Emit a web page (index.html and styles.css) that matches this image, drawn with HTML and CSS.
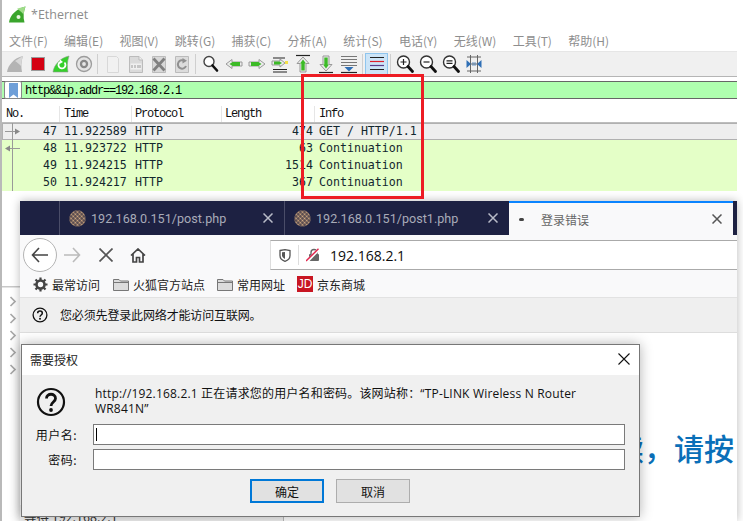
FILE: index.html
```html
<!DOCTYPE html>
<html lang="zh">
<head>
<meta charset="utf-8">
<title>Ethernet</title>
<link rel="stylesheet" href="styles.css">
</head>
<body>
<div class="desktop">

  <section class="ws">
    <div class="ws-title">
      <svg class="ws-logo" width="17" height="17" viewBox="0 0 17 17"><path d="M0 16.5C1 9 7 3 16.5 0.500C14.500 6 14 11 15.500 16.500Z" fill="#3aa52c"/><path d="M8 2.800C11 1.800 14 1 16.500 0.500C15.500 3.500 15 6 14.700 8.500C12 5.500 10 4 8 2.800Z" fill="#9fdc8a"/><circle cx="9.500" cy="11" r="2" fill="#e8f7e0"/></svg>
      <span>*Ethernet</span>
    </div>
    <nav class="ws-menu">
      <span>文件(F)</span><span>编辑(E)</span><span>视图(V)</span><span>跳转(G)</span><span>捕获(C)</span><span>分析(A)</span><span>统计(S)</span><span>电话(Y)</span><span>无线(W)</span><span>工具(T)</span><span>帮助(H)</span>
    </nav>
    <div class="ws-tools">
      <span class="tool"><svg width="20" height="20" viewBox="0 0 20 20"><path d="M2 18C3 11 9 4 18 2C16 8 16 13 17 18Z" fill="#b4b4b4"/><path d="M10 7C13 5 15 4 18 2C16.500 6 16.300 9 16 12C14 10 12 8 10 7Z" fill="#d8d8d8"/></svg></span>
      <span class="tool"><svg width="20" height="20" viewBox="0 0 20 20"><rect x="3.500" y="3.500" width="13" height="13" fill="#d40012" stroke="#9a9a9a"/></svg></span>
      <span class="tool"><svg width="20" height="20" viewBox="0 0 20 20"><path d="M2 18C3 11 9 4 18 2C16 8 16 13 17 18Z" fill="#35d02b" stroke="#8a9a8a" stroke-width=".6"/><path d="M13.500 8.500A3.500 3.500 0 1 1 9 8" fill="none" stroke="#fff" stroke-width="1.800"/><path d="M9 5.500L12 8L8.500 10Z" fill="#fff"/></svg></span>
      <span class="tool"><svg width="20" height="20" viewBox="0 0 20 20"><circle cx="10" cy="10" r="7.500" fill="#e4e4e4" stroke="#9c9c9c" stroke-width="1.300"/><circle cx="10" cy="10" r="4.200" fill="#888"/><circle cx="10" cy="10" r="1.900" fill="#e6e6e6"/></svg></span>
      <i class="tool-sep"></i>
      <span class="tool"><svg width="20" height="20" viewBox="0 0 20 20"><path d="M4.500 2.500H13.500L15.500 4.500V18.500H4.500Z" fill="#f1f1f1" stroke="#d8d8d8"/></svg></span>
      <span class="tool"><svg width="20" height="20" viewBox="0 0 20 20"><path d="M3.500 2.500H13L16.500 6V18.500H3.500Z" fill="#dadada" stroke="#bbb"/><path d="M13 2.500V6H16.500" fill="#f2f2f2" stroke="#bbb"/><rect x="4.500" y="9.500" width="11" height="6" fill="#f0f0f0"/><path d="M6 11V14M9 11V14M12 11V14M14 11V14" stroke="#9a9a9a"/></svg></span>
      <span class="tool"><svg width="20" height="20" viewBox="0 0 20 20"><path d="M3.500 2.500H16.500V18.500H3.500Z" fill="#d8d8d8" stroke="#bbb"/><path d="M4.500 4.500L15.500 16.500M15.500 4.500L4.500 16.500" stroke="#808080" stroke-width="2.800"/></svg></span>
      <span class="tool"><svg width="20" height="20" viewBox="0 0 20 20"><path d="M3.500 2.500H16.500V18.500H3.500Z" fill="#dcdcdc" stroke="#bbb"/><path d="M14 12A4.200 4.200 0 1 1 12.500 7" fill="none" stroke="#909090" stroke-width="2"/><path d="M10.500 4L15 6.800L10.500 9.500Z" fill="#909090"/></svg></span>
      <i class="tool-sep"></i>
      <span class="tool"><svg width="20" height="20" viewBox="0 0 20 20"><circle cx="8" cy="7.500" r="5" fill="#fff" stroke="#444" stroke-width="1.400"/><path d="M11.500 11.500L16 16.500" stroke="#111" stroke-width="2.600" stroke-linecap="round"/></svg></span>
      <span class="tool"><svg width="20" height="20" viewBox="0 0 20 20"><path d="M2 10L8 5.500V8H18V12H8V14.500Z" fill="#ececec" stroke="#9a9a9a"/><path d="M5.500 10L8.500 8H16V12H8.500Z" fill="#3cba27"/></svg></span>
      <span class="tool"><svg width="20" height="20" viewBox="0 0 20 20"><path d="M18 10L12 5.500V8H2V12H12V14.500Z" fill="#ececec" stroke="#9a9a9a"/><path d="M14.500 10L11.500 8H4V12H11.500Z" fill="#3cba27"/></svg></span>
      <span class="tool"><svg width="20" height="20" viewBox="0 0 20 20"><path d="M3 4H15M3 15.500H17M3 18H17" stroke="#222" stroke-width="1.200"/><path d="M15 9L10 5V7H2V11H10V13Z" fill="#ececec" stroke="#999"/><path d="M12 9L9.500 7.500H4V10.500H9.500Z" fill="#3cba27"/><rect x="15" y="7" width="3" height="3" fill="#f3df4b"/></svg></span>
      <span class="tool"><svg width="20" height="20" viewBox="0 0 20 20"><path d="M3 1.500H17" stroke="#222" stroke-width="1.200"/><path d="M10 3L16 9.500H13V18H7V9.500H4Z" fill="#ececec" stroke="#999"/><path d="M10 5.500L13 9.500H11.700V16.500H8.300V9.500H7Z" fill="#3cba27"/></svg></span>
      <span class="tool"><svg width="20" height="20" viewBox="0 0 20 20"><path d="M3 18.500H17" stroke="#222" stroke-width="1.200"/><path d="M10 17L16 10.500H13V2H7V10.500H4Z" fill="#ececec" stroke="#999"/><path d="M10 14.500L13 10.500H11.700V3.500H8.300V10.500H7Z" fill="#3cba27"/></svg></span>
      <span class="tool"><svg width="20" height="20" viewBox="0 0 20 20"><path d="M2 2.500H18M2 5.500H18M2 8.500H18M2 11.500H18" stroke="#777" stroke-width="1"/><path d="M2 18.500H18" stroke="#222" stroke-width="1.200"/><path d="M5.500 13H14.500L10 17.500Z" fill="#2f6fb5"/></svg></span>
      <i class="tool-sep tool-sep-tight"></i>
      <span class="tool tool-on"><svg width="20" height="20" viewBox="0 0 20 20"><path d="M3 3.500H17M3 15.500H17" stroke="#222" stroke-width="1.200"/><path d="M3 7.500H17" stroke="#e0202a" stroke-width="1.200"/><path d="M3 11.500H17" stroke="#5a3d8a" stroke-width="1.200"/></svg></span>
      <i class="tool-sep tool-sep-tight"></i>
      <span class="tool"><svg width="20" height="20" viewBox="0 0 20 20"><circle cx="8.500" cy="8" r="6" fill="#fff" stroke="#333" stroke-width="1.400"/><path d="M5.500 8H11.500M8.500 5V11" stroke="#222" stroke-width="1.200"/><path d="M13 12.500L17.500 17.500" stroke="#111" stroke-width="2.800" stroke-linecap="round"/></svg></span>
      <span class="tool"><svg width="20" height="20" viewBox="0 0 20 20"><circle cx="8.500" cy="8" r="6" fill="#fff" stroke="#333" stroke-width="1.400"/><path d="M5.500 8H11.500" stroke="#222" stroke-width="1.200"/><path d="M13 12.500L17.500 17.500" stroke="#111" stroke-width="2.800" stroke-linecap="round"/></svg></span>
      <span class="tool"><svg width="20" height="20" viewBox="0 0 20 20"><circle cx="8.500" cy="8" r="6" fill="#fff" stroke="#333" stroke-width="1.400"/><path d="M5.500 6.800H11.500M5.500 9.300H11.500" stroke="#222" stroke-width="1.200"/><path d="M13 12.500L17.500 17.500" stroke="#111" stroke-width="2.800" stroke-linecap="round"/></svg></span>
      <span class="tool"><svg width="20" height="20" viewBox="0 0 20 20"><path d="M3 3H17M3 10H17M3 17H17M6.500 1V19M13.500 1V19" stroke="#666" stroke-width="1"/><path d="M2.500 6L7 10L2.500 14ZM17.500 6L13 10L17.500 14Z" fill="#2f6fb5"/><path d="M8 8H12V12H8Z" fill="#2f6fb5" opacity=".35"/></svg></span>
    </div>
    <div class="ws-filter">
      <span class="bookmark"><svg width="9" height="15" viewBox="0 0 9 15"><path d="M0 0H9V15L4.500 11.500L0 15Z" fill="#6f9fd8"/></svg></span>
      <span class="filter-text">http&amp;&amp;ip.addr==192.168.2.1</span>
    </div>
    <div class="pk-head">
      <span>No.</span><span>Time</span><span>Protocol</span><span>Length</span><span>Info</span>
    </div>
    <div class="pk-row pk-sel">
      <svg class="pk-tree" width="20" height="17" viewBox="0 0 20 17"><path d="M10.500 0V17M3 8.500H14" stroke="#999"/><path d="M13 5.500L18 8.500L13 11.500Z" fill="#888"/></svg>
      <span class="pk-no">47</span><span>11.922589</span><span>HTTP</span><span class="pk-len">474</span><span>GET / HTTP/1.1</span>
    </div>
    <div class="pk-row pk-data">
      <svg class="pk-tree" width="20" height="17" viewBox="0 0 20 17"><path d="M10.500 0V17M6 8.500H18" stroke="#999"/><path d="M8 5.500L3 8.500L8 11.500Z" fill="#888"/></svg>
      <span class="pk-no">48</span><span>11.923722</span><span>HTTP</span><span class="pk-len">63</span><span>Continuation</span>
    </div>
    <div class="pk-row pk-data">
      <svg class="pk-tree" width="20" height="17" viewBox="0 0 20 17"><path d="M10.500 0V17" stroke="#999"/></svg>
      <span class="pk-no">49</span><span>11.924215</span><span>HTTP</span><span class="pk-len">1514</span><span>Continuation</span>
    </div>
    <div class="pk-row pk-data">
      <svg class="pk-tree" width="20" height="17" viewBox="0 0 20 17"><path d="M10.500 0V17" stroke="#999"/></svg>
      <span class="pk-no">50</span><span>11.924217</span><span>HTTP</span><span class="pk-len">367</span><span>Continuation</span>
    </div>
    <div class="ws-split"></div>
    <div class="ws-detail">
      <svg width="8" height="11" viewBox="0 0 8 11"><path d="M1.500 1L6 5.500L1.500 10" fill="none" stroke="#aaa" stroke-width="1.700"/></svg>
      <svg width="8" height="11" viewBox="0 0 8 11"><path d="M1.500 1L6 5.500L1.500 10" fill="none" stroke="#aaa" stroke-width="1.700"/></svg>
      <svg width="8" height="11" viewBox="0 0 8 11"><path d="M1.500 1L6 5.500L1.500 10" fill="none" stroke="#aaa" stroke-width="1.700"/></svg>
      <svg width="8" height="11" viewBox="0 0 8 11"><path d="M1.500 1L6 5.500L1.500 10" fill="none" stroke="#aaa" stroke-width="1.700"/></svg>
      <svg width="8" height="11" viewBox="0 0 8 11"><path d="M1.500 1L6 5.500L1.500 10" fill="none" stroke="#aaa" stroke-width="1.700"/></svg>
    </div>
  </section>

  <section class="ff">
    <div class="ff-tabs">
      <div class="ff-tab">
        <svg class="favicon" width="17" height="17" viewBox="0 0 17 17"><defs><pattern id="fav" width="3" height="3" patternUnits="userSpaceOnUse" patternTransform="rotate(45)"><rect width="3" height="3" fill="#4a3f48"/><circle cx="1.500" cy="1.500" r="1.100" fill="#d9b184"/></pattern></defs><circle cx="8.500" cy="8.500" r="8.300" fill="url(#fav)"/></svg>
        <span class="ff-tab-title">192.168.0.151/post.php</span>
        <svg class="ff-x" width="10" height="10" viewBox="0 0 10 10"><path d="M.5 .5L9.500 9.500M9.500 .5L.5 9.500" stroke="#b9bcc8" stroke-width="1.500"/></svg>
      </div>
      <div class="ff-tab">
        <svg class="favicon" width="17" height="17" viewBox="0 0 17 17"><circle cx="8.500" cy="8.500" r="8.300" fill="url(#fav)"/></svg>
        <span class="ff-tab-title">192.168.0.151/post1.php</span>
        <svg class="ff-x" width="10" height="10" viewBox="0 0 10 10"><path d="M.5 .5L9.500 9.500M9.500 .5L.5 9.500" stroke="#b9bcc8" stroke-width="1.500"/></svg>
      </div>
      <div class="ff-tab ff-tab-on">
        <i class="ff-busy"></i>
        <span class="ff-tab-title">登录错误</span>
        <svg class="ff-x" width="10" height="10" viewBox="0 0 10 10"><path d="M.5 .5L9.500 9.500M9.500 .5L.5 9.500" stroke="#555" stroke-width="1.500"/></svg>
      </div>
    </div>
    <div class="ff-nav">
      <span class="ff-back"><svg width="18" height="16" viewBox="0 0 18 16"><path d="M8 1L1.500 8L8 15M1.500 8H17" fill="none" stroke="#444" stroke-width="1.600"/></svg></span>
      <svg class="ff-fwd" width="17" height="16" viewBox="0 0 17 16"><path d="M9 1L15.500 8L9 15M15.500 8H0" fill="none" stroke="#bbb" stroke-width="1.600"/></svg>
      <svg class="ff-stop" width="14" height="14" viewBox="0 0 14 14"><path d="M.5 .5L13.500 13.500M13.500 .5L.5 13.500" stroke="#555" stroke-width="1.700"/></svg>
      <svg class="ff-home" width="16" height="15" viewBox="0 0 16 15"><path d="M1 7.500L8 1L15 7.500M3 6V14H6.500V9.500H9.500V14H13V6" fill="none" stroke="#444" stroke-width="1.700"/></svg>
      <div class="ff-url">
        <svg class="ff-shield" width="12" height="13" viewBox="0 0 12 13"><path d="M1 1.500L6 .7L11 1.500V6.500C11 9.500 8.500 11.500 6 12.300C3.500 11.500 1 9.500 1 6.500Z" fill="none" stroke="#555" stroke-width="1.300"/><path d="M6 3V10C4.500 9.300 3 8 3 6.500V3.200Z" fill="#555"/></svg>
        <i class="ff-url-sep"></i>
        <svg class="ff-lock" width="14" height="14" viewBox="0 0 14 14"><rect x="3" y="6" width="10" height="7" rx="1" fill="#666"/><path d="M5 6V4.500A3 3 0 0 1 11 4.500V6" fill="none" stroke="#666" stroke-width="1.400"/><path d="M1 13.500L13 1" stroke="#fff" stroke-width="3"/><path d="M0 13L12.500 .8" stroke="#e22850" stroke-width="1.500"/></svg>
        <span class="ff-url-text">192.168.2.1</span>
      </div>
    </div>
    <div class="ff-marks">
      <span class="mark mark-most"><svg width="15" height="15" viewBox="0 0 15 15"><circle cx="7.500" cy="7.500" r="4" fill="none" stroke="#444" stroke-width="2.600"/><path d="M7.500 .5V3M7.500 12V14.500M.5 7.500H3M12 7.500H14.500M2.500 2.500L4.300 4.300M10.700 10.700L12.500 12.500M12.500 2.500L10.700 4.300M4.300 10.700L2.500 12.500" stroke="#444" stroke-width="2.200"/></svg>最常访问</span>
      <span class="mark"><svg width="16" height="13" viewBox="0 0 16 13"><path d="M.5 12.500V1.500H6L7.500 3H15.500V12.500Z" fill="#dcdcdc" stroke="#777"/><path d="M.5 4.500H15.500" stroke="#777"/></svg>火狐官方站点</span>
      <span class="mark"><svg width="16" height="13" viewBox="0 0 16 13"><path d="M.5 12.500V1.500H6L7.500 3H15.500V12.500Z" fill="#dcdcdc" stroke="#777"/><path d="M.5 4.500H15.500" stroke="#777"/></svg>常用网址</span>
      <span class="mark"><span class="jd">JD</span>京东商城</span>
    </div>
    <div class="ff-notice">
      <svg width="16" height="16" viewBox="0 0 16 16"><circle cx="8" cy="8" r="6.900" fill="none" stroke="#111" stroke-width="1.300"/><path d="M5.700 6.200C5.700 3.400 10.300 3.400 10.300 6.200C10.300 8 8 8 8 9.800" fill="none" stroke="#111" stroke-width="1.500"/><circle cx="8" cy="11.800" r="1" fill="#111"/></svg>
      <span>您必须先登录此网络才能访问互联网。</span>
    </div>
    <div class="ff-page">
      <p class="ff-big">续，请按</p>
    </div>
    <div class="ff-status">等待 192.168.2.1</div>
  </section>

  <div class="annot"></div>

  <section class="dlg">
    <header class="dlg-title">
      <span>需要授权</span>
      <svg width="12" height="12" viewBox="0 0 12 12"><path d="M.5 .5L11.500 11.500M11.500 .5L.5 11.500" stroke="#111" stroke-width="1.100"/></svg>
    </header>
    <div class="dlg-body">
      <div class="dlg-msg">
        <svg width="30" height="30" viewBox="0 0 30 30"><circle cx="15" cy="15" r="13" fill="none" stroke="#111" stroke-width="2.200"/><path d="M10.500 11.500C10.500 5.800 19.500 5.800 19.500 11.500C19.500 15 15 15 15 19" fill="none" stroke="#111" stroke-width="2.800"/><circle cx="15" cy="23" r="1.900" fill="#111"/></svg>
        <p>http://192.168.2.1 正在请求您的用户名和密码。该网站称：“TP-LINK Wireless N Router WR841N”</p>
      </div>
      <div class="dlg-fields">
        <label>用户名:</label><div class="dlg-input"><i class="caret"></i></div>
        <label>密码:</label><div class="dlg-input"></div>
      </div>
      <div class="dlg-btns">
        <button class="btn btn-def">确定</button>
        <button class="btn">取消</button>
      </div>
    </div>
  </section>
</div>
</body>
</html>
```

FILE: styles.css
```css
* { box-sizing: border-box; }
html, body { margin: 0; background: #fff; }
body { font-family: "Noto Sans CJK SC", sans-serif; font-size: 12px; }
.desktop { position: relative; width: 743px; height: 521px; overflow: hidden; background: #fff; }

/* Wireshark window */
.ws { position: absolute; left: 0; top: 0; width: 737px; height: 521px; border-left: 2px solid #b9b9b9; background: #fff; display: flex; flex-direction: column; }
.ws-title { flex: none; height: 28px; display: flex; align-items: center; gap: 5px; padding-left: 7px; color: #8c8c8c; font: 12.500px "Open Sans", sans-serif; }
.ws-logo { flex: none; }
.ws-menu { flex: none; height: 23px; display: flex; gap: 16.300px; align-items: center; padding: 2px 0 0 7px; color: #8e8e8e; font: 12px "Noto Sans CJK SC", sans-serif; }
.ws-tools { flex: none; height: 26px; display: flex; align-items: center; padding-left: 1px; background: #f0f0f0; border-top: 1px solid #e6e6e6; border-bottom: 1px solid #b5b5b5; }
.tool { flex: none; width: 23px; height: 22px; display: flex; align-items: center; justify-content: center; }
.tool-on { background: #cce4f7; border: 1px solid #8fc5ee; }
.tool-sep { flex: none; width: 1px; height: 20px; margin: 0 3px 0 2px; background: #cfcfcf; }
.tool-sep-tight { margin-right: 2px; }
.ws-filter { height: 18px; margin-top: 4px; display: flex; align-items: stretch; background: #afffaf; border-top: 1px solid #666; border-bottom: 1px solid #666; flex: none; }
.bookmark { width: 18px; margin-left: 2px; background: #fff; border: 1px solid #888; border-radius: 2px; margin-top: -1px; margin-bottom: -1px; display: flex; align-items: center; justify-content: center; }
.filter-text { padding: 1px 0 0 3px; font: 12px/16px "Liberation Mono", monospace; letter-spacing: -1.200px; color: #000; }
.pk-head { flex: none; height: 24px; padding-top: 7px; display: grid; grid-template-columns: 58px 72px 90px 93px 1fr; border-bottom: 1px solid #bdbdbd; font: 12px/16px "Liberation Mono", monospace; letter-spacing: -1.200px; color: #111; }
.pk-head span { padding-left: 3px; border-right: 1px solid #e6e6e6; }
.pk-head span:first-child, .pk-head span:nth-child(2), .pk-head span:last-child { padding-left: 4px; }
.pk-head span:last-child { border-right: 0; }
.pk-row { flex: none; position: relative; height: 17px; display: grid; grid-template-columns: 59px 71px 90px 91px 1fr; font: 11.600px/17px "DejaVu Sans Mono", monospace; color: #12272e; white-space: nowrap; }
.pk-row span:nth-of-type(2) { padding-left: 3px; }
.pk-row span:nth-of-type(3) { padding-left: 3px; }
.pk-row span:nth-of-type(5) { padding-left: 6px; }
.pk-no, .pk-len { text-align: right; }
.pk-no { padding-right: 4px; }
.pk-sel { background: #eeeeee; border-top: 1px solid #b0b0b0; border-bottom: 1px solid #b0b0b0; box-shadow: inset 1px 0 #b0b0b0; line-height: 15px; }
.pk-data { background: #e4ffc7; }
.pk-tree { position: absolute; left: 0; top: 0; }
.pk-sel .pk-tree { top: -1px; }
.ws-split { height: 2px; margin-top: 95px; border-top: 1px solid #c8c8c8; border-bottom: 1px solid #e4e4e4; background: #f0f0f0; flex: none; }
.ws-detail { margin-top: 8px; padding-left: 7px; display: flex; flex-direction: column; gap: 6px; }

/* Firefox window */
.ff { position: absolute; left: 20px; top: 201px; width: 717px; height: 320px; background: #fff; box-shadow: 0 0 9px rgba(0,0,0,.28); display: flex; flex-direction: column; }
.ff-tabs { flex: none; height: 34px; padding-left: 39px; display: flex; background: #1d2142; }
.ff-tab { width: 225px; height: 34px; display: flex; align-items: center; padding: 0 11px 0 9px; border-left: 1px solid #4a4d68; color: #a8abb8; font: 12.600px Roboto, sans-serif; }
.ff-tab-title { flex: 1; padding-left: 5px; white-space: nowrap; }
.ff-x { flex: none; }
.favicon { flex: none; }
.ff-tab-on { width: 224px; background: #f9f9fa; border-left: 0; border-top: 2px solid #0a84ff; color: #666; padding-left: 10px; font: 12px "Noto Sans CJK SC", sans-serif; }
.ff-tab-on .ff-tab-title { padding-left: 17px; }
.ff-busy { flex: none; width: 5px; height: 3px; border-radius: 2px; background: #444; }
.ff-nav { flex: none; height: 35px; display: flex; align-items: center; padding: 5px 0 0 3px; background: #f9f9fa; }
.ff-back { position: relative; z-index: 1; flex: none; width: 34px; height: 34px; border-radius: 50%; background: #fff; border: 1px solid #b4b4b4; display: flex; align-items: center; justify-content: center; }
.ff-fwd { flex: none; margin-left: 7px; }
.ff-stop { flex: none; margin-left: 18px; }
.ff-home { flex: none; margin-left: 17px; }
.ff-url { flex: 1; height: 30px; margin-left: 124px; display: flex; align-items: center; background: #fff; border: 1px solid #aaa; border-right: 0; border-left-color: #ddd; }
.ff-shield { flex: none; margin-left: 8px; }
.ff-url-sep { flex: none; width: 1px; height: 20px; margin-left: 7px; background: #ddd; }
.ff-lock { flex: none; margin-left: 7px; }
.ff-url-text { padding-left: 10px; color: #0c0c0d; font: 14px "Open Sans", sans-serif; }
.ff-marks { flex: none; height: 28px; display: flex; align-items: center; padding: 1px 0 0 13px; background: #f9f9fa; border-bottom: 1px solid #e2e2e2; color: #222; }
.mark { display: flex; align-items: center; gap: 4px; margin-right: 12px; white-space: nowrap; }
.mark-most { margin-right: 13px; }
.jd { width: 16px; height: 16px; background: #c81623; color: #fff; font: 400 12px/16px "Liberation Sans", sans-serif; text-align: center; }
.ff-notice { flex: none; height: 35px; display: flex; align-items: center; gap: 12px; padding-left: 12px; background: #efefef; border-bottom: 1px solid #ddd; color: #111; letter-spacing: -.150px; }
.ff-notice span { position: relative; top: -1px; }
.ff-page { flex: 1; padding: 94px 3px 0 0; text-align: right; background: #fff; }
.ff-big { margin: 0; font: 500 30px/40px "Noto Sans CJK SC", sans-serif; color: #0a6fb8; }
.ff-status { position: absolute; left: 0; bottom: 0; width: 264px; height: 16px; padding: 4px 0 0 4px; background: #f0f0f0; border-right: 1px solid #bbb; font-size: 12.500px; line-height: 16px; color: #333; }

/* Annotation */
.annot { position: absolute; left: 301px; top: 74px; width: 123px; height: 125px; border: 3px solid #ed1c24; }

/* Auth dialog */
.dlg { position: absolute; left: 21px; top: 344px; width: 619px; height: 173px; background: #f0f0f0; border: 1px solid #777; box-shadow: 0 0 12px rgba(0,0,0,.3); display: flex; flex-direction: column; }
.dlg-title { flex: none; height: 30px; padding: 0 9px 2px 8px; display: flex; align-items: center; justify-content: space-between; background: #fff; color: #222; }
.dlg-body { flex: 1; display: flex; flex-direction: column; padding: 11px 14px 0 14px; color: #111; }
.dlg-msg { flex: none; height: 38px; display: flex; gap: 29px; }
.dlg-msg svg { flex: none; margin-top: 1px; }
.dlg-msg p { margin: 0; width: 490px; font: 12px/15px "Open Sans", "Noto Sans CJK SC", sans-serif; letter-spacing: .18px; }
.dlg-fields { flex: none; display: grid; grid-template-columns: 41px 532px; column-gap: 16px; row-gap: 4px; }
.dlg-fields label { text-align: right; line-height: 21px; letter-spacing: .5px; white-space: nowrap; justify-self: end; }
.dlg-input { height: 21px; background: #fff; border: 1px solid #7a7a7a; padding: 3px 0 0 2px; }
.caret { display: block; width: 1px; height: 13px; background: #000; }
.dlg-btns { flex: none; display: flex; justify-content: flex-start; gap: 12px; margin-top: 9px; padding-left: 214px; }
.btn { width: 74px; height: 24px; padding: 0; background: #e1e1e1; border: 1px solid #adadad; color: #111; font: 12px "Noto Sans CJK SC", sans-serif; }
.btn-def { border: 2px solid #0078d7; }
```
